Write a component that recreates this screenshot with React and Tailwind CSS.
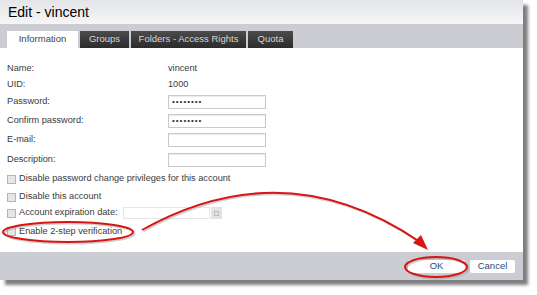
import React from "react";

const font = { fontFamily: '"Liberation Sans", Arial, sans-serif' };

function Field({ dots }) {
  return (
    <div className="w-[98px] h-[14px] bg-white border border-[#c9c9c9] shadow-[inset_0_1px_1px_rgba(0,0,0,0.08)] flex items-center pl-[3px] text-[#333] text-[8px] tracking-[1px] leading-none">
      {dots ? "••••••••" : ""}
    </div>
  );
}

function Check({ label, children }) {
  return (
    <div className="flex items-center h-full">
      <span className="w-[9px] h-[9px] border border-[#b5b5b5] bg-[#e6e6e6] mr-[3px]" />
      <span>{label}</span>
      {children}
    </div>
  );
}

export default function App() {
  const rows = [
    { h: "h-[16px]", label: "Name:", value: <span>vincent</span> },
    { h: "h-[16px]", label: "UID:", value: <span>1000</span> },
    { h: "h-[18px]", label: "Password:", value: <Field dots /> },
    { h: "h-[19px]", label: "Confirm password:", value: <Field dots /> },
    { h: "h-[20px]", label: "E-mail:", value: <Field /> },
    { h: "h-[19px]", label: "Description:", value: <Field /> },
  ];

  return (
    <div className="relative w-[537px] h-[295px] bg-white overflow-hidden" style={font}>
      <div className="w-[523px] shadow-[5px_5px_3px_rgba(0,0,0,0.5)] bg-white">
        {/* title */}
        <div className="h-[24px] bg-gradient-to-b from-[#e4e5e8] to-[#f6f6f7] flex items-center pl-[8px] text-[14px] text-black">
          Edit - vincent
        </div>
        {/* tabs */}
        <div className="h-[24px] bg-[#cbcdd3] flex items-end pl-[7px] gap-[2px] text-[9.5px]">
          <div className="h-[17px] w-[71px] bg-white flex items-center justify-center text-[#444]">Information</div>
          <div className="h-[17px] w-[49px] bg-gradient-to-b from-[#4c4c4c] to-[#2c2c2c] flex items-center justify-center text-[#d6d6d6]">Groups</div>
          <div className="h-[17px] w-[115px] bg-gradient-to-b from-[#4c4c4c] to-[#2c2c2c] flex items-center justify-center text-[#d6d6d6]">Folders - Access Rights</div>
          <div className="h-[17px] w-[45px] bg-gradient-to-b from-[#4c4c4c] to-[#2c2c2c] flex items-center justify-center text-[#d6d6d6]">Quota</div>
        </div>
        {/* body */}
        <div className="h-[204px] pt-[13px] pl-[7px] text-[9.2px] text-[#3a3a3a] flex flex-col">
          {rows.map((r) => (
            <div key={r.label} className={`${r.h} flex items-center`}>
              <span className="w-[161px]">{r.label}</span>
              {r.value}
            </div>
          ))}
          <div className="h-[20px]"><Check label="Disable password change privileges for this account" /></div>
          <div className="h-[16px]"><Check label="Disable this account" /></div>
          <div className="h-[16px]">
            <Check label="Account expiration date:">
              <div className="ml-[5px] flex items-center">
                <div className="w-[87px] h-[12px] border border-[#e6e6e6] bg-white" />
                <div className="ml-[1px] w-[11px] h-[12px] bg-[#e2e2e2] flex items-center justify-center">
                  <span className="w-[5px] h-[5px] border border-[#bdbdbd]" />
                </div>
              </div>
            </Check>
          </div>
          <div className="h-[21px]"><Check label="Enable 2-step verification" /></div>
        </div>
        {/* footer */}
        <div className="h-[28px] bg-[#cbcdd3] flex items-center justify-end pr-[8px] gap-[5px] text-[9.5px] text-[#2b4a78]">
          <div className="w-[57px] h-[13px] bg-white rounded-[2px] flex items-center justify-center">OK</div>
          <div className="w-[45px] h-[13px] bg-white rounded-[2px] flex items-center justify-center">Cancel</div>
        </div>
      </div>

      {/* annotations */}
      <svg className="absolute left-0 top-0" width="537" height="295" viewBox="0 0 537 295">
        <g fill="none" stroke="#999" strokeOpacity="0.45" strokeWidth="2" transform="translate(1.5,1.5)">
          <ellipse cx="68" cy="232" rx="65" ry="10" />
          <path d="M142 230 Q285 150 420 242" />
          <ellipse cx="436" cy="267" rx="31" ry="10" />
        </g>
        <g fill="none" stroke="#d81414" strokeWidth="2">
          <ellipse cx="68" cy="232" rx="65" ry="10" />
          <path d="M142 230 Q285 150 420 242" />
          <ellipse cx="436" cy="267" rx="31" ry="10" />
        </g>
        <polygon points="428,250 413,243 421,235" fill="#d81414" />
      </svg>
    </div>
  );
}
